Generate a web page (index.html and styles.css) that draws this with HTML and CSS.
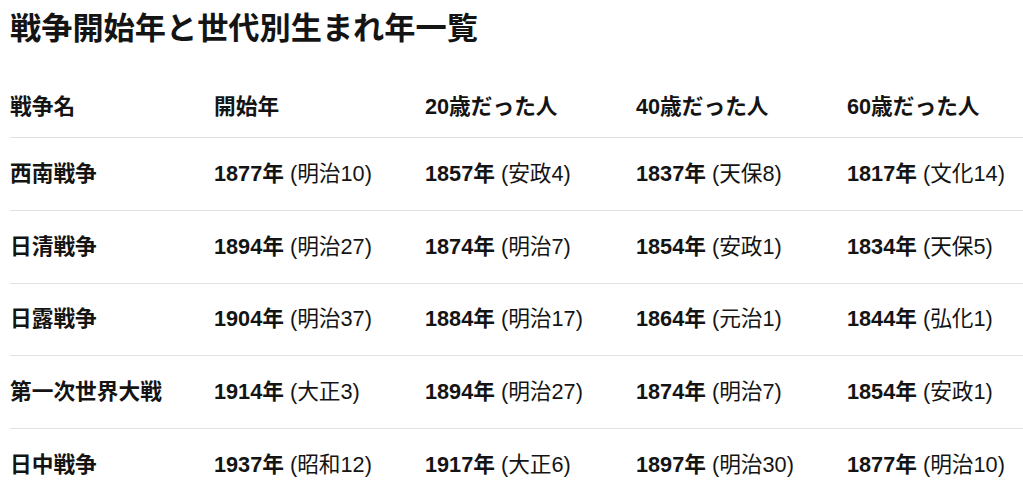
FILE: index.html
```html
<!DOCTYPE html>
<html lang="ja">
<head>
<meta charset="utf-8">
<title>戦争開始年と世代別生まれ年一覧</title>
<link rel="stylesheet" href="styles.css">
</head>
<body>
<main class="page">
  <h1 class="title">戦争開始年と世代別生まれ年一覧</h1>
  <div class="table">
    <div class="row head">
      <div class="cell">戦争名</div>
      <div class="cell">開始年</div>
      <div class="cell">20歳だった人</div>
      <div class="cell">40歳だった人</div>
      <div class="cell">60歳だった人</div>
    </div>
    <div class="row">
      <div class="cell name">西南戦争</div>
      <div class="cell"><b>1877年</b> (明治10)</div>
      <div class="cell"><b>1857年</b> (安政4)</div>
      <div class="cell"><b>1837年</b> (天保8)</div>
      <div class="cell"><b>1817年</b> (文化14)</div>
    </div>
    <div class="row">
      <div class="cell name">日清戦争</div>
      <div class="cell"><b>1894年</b> (明治27)</div>
      <div class="cell"><b>1874年</b> (明治7)</div>
      <div class="cell"><b>1854年</b> (安政1)</div>
      <div class="cell"><b>1834年</b> (天保5)</div>
    </div>
    <div class="row">
      <div class="cell name">日露戦争</div>
      <div class="cell"><b>1904年</b> (明治37)</div>
      <div class="cell"><b>1884年</b> (明治17)</div>
      <div class="cell"><b>1864年</b> (元治1)</div>
      <div class="cell"><b>1844年</b> (弘化1)</div>
    </div>
    <div class="row">
      <div class="cell name">第一次世界大戦</div>
      <div class="cell"><b>1914年</b> (大正3)</div>
      <div class="cell"><b>1894年</b> (明治27)</div>
      <div class="cell"><b>1874年</b> (明治7)</div>
      <div class="cell"><b>1854年</b> (安政1)</div>
    </div>
    <div class="row">
      <div class="cell name">日中戦争</div>
      <div class="cell"><b>1937年</b> (昭和12)</div>
      <div class="cell"><b>1917年</b> (大正6)</div>
      <div class="cell"><b>1897年</b> (明治30)</div>
      <div class="cell"><b>1877年</b> (明治10)</div>
    </div>
  </div>
</main>
</body>
</html>
```
FILE: styles.css
```css
html, body {
  margin: 0;
  padding: 0;
  background: #ffffff;
  overflow: hidden;
}
body {
  font-family: "Liberation Sans", "Noto Sans CJK JP", sans-serif;
  color: #141414;
}
.page {
  padding-left: 10px;
}
.title {
  margin: 9px 0 0;
  font-size: 31.2px;
  line-height: 40px;
  font-weight: 700;
}
.table {
  margin-top: 47px;
  font-size: 21.7px;
  line-height: 22px;
}
.row {
  display: grid;
  grid-template-columns: 204px 211px 211px 211px 1fr;
  align-items: center;
  box-sizing: border-box;
  height: 72.75px;
  border-bottom: 1px solid #e2e2e6;
}
.row.head {
  height: auto;
  padding-bottom: 19px;
  font-weight: 700;
}
.cell {
  white-space: nowrap;
}
.name {
  font-weight: 700;
}
.cell b {
  font-weight: 700;
}
```
